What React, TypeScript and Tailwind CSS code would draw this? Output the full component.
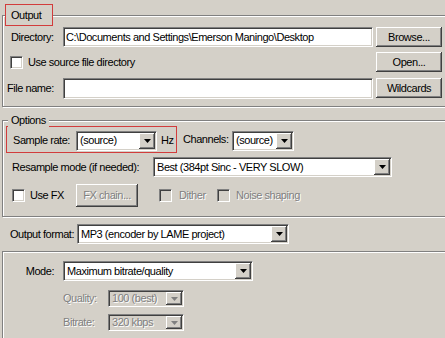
import type { ReactNode } from 'react';

// classic win2k bevels
const etched = 'border border-[#808080] shadow-[inset_1px_1px_0_#fff,1px_1px_0_#fff]';
const sunken = 'border border-t-[#808080] border-l-[#808080] border-b-white border-r-white';
const sunkenInner = 'shadow-[inset_1px_1px_0_#404040,inset_-1px_-1px_0_#d4d0c8]';
const raised = 'shadow-[inset_-1px_-1px_0_#404040,inset_1px_1px_0_#fff,inset_-2px_-2px_0_#808080,inset_2px_2px_0_#d4d0c8]';
const grayText = 'text-[#808080] [text-shadow:1px_1px_0_#fff]';

function Arrow({ disabled }: { disabled?: boolean }) {
    return (
        <div className={`w-[16px] self-stretch flex items-center justify-center bg-[#d4d0c8] ${raised}`}>
            <svg width="7" height="4" viewBox="0 0 7 4">
                <path d="M0 0h7L3.5 4z" fill={disabled ? '#808080' : '#000'} />
            </svg>
        </div>
    );
}

function Select({ value, className, disabled }: { value: string; className: string; disabled?: boolean }) {
    return (
        <div className={`flex ${sunken} ${className}`}>
            <div className={`flex flex-1 min-w-0 items-center p-[1px] ${sunkenInner} ${disabled ? 'bg-[#d4d0c8]' : 'bg-white'}`}>
                <span className={`flex-1 truncate pl-[2px] ${disabled ? grayText : ''}`}>{value}</span>
                <Arrow disabled={disabled} />
            </div>
        </div>
    );
}

function TextBox({ value, className }: { value?: string; className: string }) {
    return (
        <div className={`flex ${sunken} ${className}`}>
            <div className={`flex flex-1 items-center bg-white pl-[2px] ${sunkenInner}`}>{value}</div>
        </div>
    );
}

function Button({ children, className, disabled }: { children: ReactNode; className: string; disabled?: boolean }) {
    return (
        <div className={`flex items-center justify-center bg-[#d4d0c8] ${raised} ${className}`}>
            <span className={disabled ? grayText : ''}>{children}</span>
        </div>
    );
}

function Check({ disabled }: { disabled?: boolean }) {
    return (
        <div className={`w-[13px] h-[13px] shrink-0 ${sunken} ${sunkenInner} ${disabled ? 'bg-[#d4d0c8]' : 'bg-white'}`} />
    );
}

export default function App() {
    return (
        <div className="w-[445px] h-[338px] overflow-hidden bg-[#d4d0c8] text-black text-[11px] leading-[13px] tracking-[-0.45px] font-['Liberation_Sans',Arial,sans-serif]">
            {/* Output */}
            <div className={`relative ml-[2px] mt-[15px] w-[470px] h-[92px] pt-[11px] ${etched}`}>
                <div className="absolute -top-[12px] left-[2px] w-[48px] h-[22px] flex items-center pl-[5px] bg-[#d4d0c8] border border-[#d23c3c]">
                    Output
                </div>
                <div className="flex items-center h-[20px]">
                    <div className="w-[370px] flex items-center justify-between pl-[8px]">
                        <span>Directory:</span>
                        <TextBox value="C:\Documents and Settings\Emerson Maningo\Desktop" className="w-[310px] h-[20px]" />
                    </div>
                    <Button className="ml-[3px] w-[66px] h-[20px]">Browse...</Button>
                </div>
                <div className="flex items-center h-[20px] mt-[5px]">
                    <div className="w-[370px] flex items-center pl-[7px]">
                        <Check />
                        <span className="ml-[5px]">Use source file directory</span>
                    </div>
                    <Button className="ml-[3px] w-[66px] h-[20px]">Open...</Button>
                </div>
                <div className="flex items-center h-[20px] mt-[6px]">
                    <div className="w-[370px] flex items-center justify-between pl-[4px]">
                        <span>File name:</span>
                        <TextBox className="w-[310px] h-[21px]" />
                    </div>
                    <Button className="ml-[3px] w-[66px] h-[20px]">Wildcards</Button>
                </div>
            </div>

            {/* Options */}
            <div className={`relative ml-[2px] mt-[13px] w-[470px] h-[97px] pt-[5px] ${etched}`}>
                <span className="absolute -top-[7px] left-[5px] px-[3px] bg-[#d4d0c8]">Options</span>
                <div className="flex items-center">
                    <div className="ml-[3px] w-[171px] h-[27px] flex items-center pl-[6px] pt-[2px] border border-[#d23c3c]">
                        <span className="w-[63px]">Sample rate:</span>
                        <Select value="(source)" className="w-[81px] h-[20px]" />
                        <span className="ml-[4px]">Hz</span>
                    </div>
                    <span className="ml-[6px] w-[49px]">Channels:</span>
                    <Select value="(source)" className="w-[62px] h-[20px] mt-[2px]" />
                </div>
                <div className="flex items-center mt-[4px] h-[20px]">
                    <span className="ml-[9px] w-[141px]">Resample mode (if needed):</span>
                    <Select value="Best (384pt Sinc - VERY SLOW)" className="w-[239px] h-[20px]" />
                </div>
                <div className="flex items-center mt-[7px] h-[23px]">
                    <div className="ml-[9px] w-[64px] flex items-center">
                        <Check />
                        <span className="ml-[5px]">Use FX</span>
                    </div>
                    <Button disabled className="w-[62px] h-[23px]">FX chain...</Button>
                    <div className="ml-[21px] w-[58px] flex items-center">
                        <Check disabled />
                        <span className={`ml-[7px] ${grayText}`}>Dither</span>
                    </div>
                    <Check disabled />
                    <span className={`ml-[6px] ${grayText}`}>Noise shaping</span>
                </div>
            </div>

            {/* Format */}
            <div className="flex items-center mt-[7px] h-[20px] pl-[10px]">
                <span className="w-[67px]">Output format:</span>
                <Select value="MP3 (encoder by LAME project)" className="w-[212px] h-[20px]" />
            </div>

            <div className={`ml-[2px] mt-[7px] w-[470px] h-[100px] pt-[9px] ${etched}`}>
                <div className="flex items-center h-[20px]">
                    <span className="w-[51px] text-right">Mode:</span>
                    <Select value="Maximum bitrate/quality" className="ml-[9px] w-[190px] h-[20px]" />
                </div>
                <div className="flex items-center mt-[9px] h-[17px]">
                    <span className={`ml-[60px] w-[45px] ${grayText}`}>Quality:</span>
                    <Select disabled value="100 (best)" className="w-[76px] h-[17px]" />
                </div>
                <div className="flex items-center mt-[7px] h-[17px]">
                    <span className={`ml-[60px] w-[45px] ${grayText}`}>Bitrate:</span>
                    <Select disabled value="320 kbps" className="w-[76px] h-[17px]" />
                </div>
            </div>
        </div>
    );
}
